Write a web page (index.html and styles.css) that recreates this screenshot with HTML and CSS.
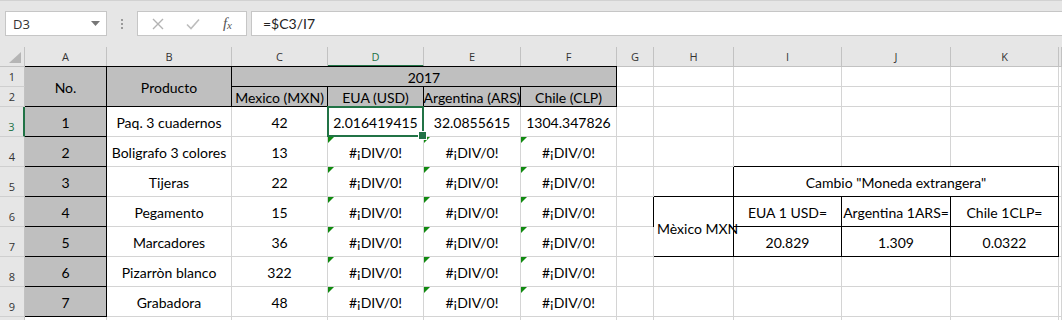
FILE: index.html
```html
<!DOCTYPE html>
<html lang="es">
<head>
  <meta charset="UTF-8">
  <title>Libro1 - Excel</title>
  <link rel="stylesheet" href="styles.css">
</head>
<body>
  <!-- Formula bar -->
  <header class="topbar">
    <div class="namebox">
      <span>D3</span>
      <svg width="9" height="5" viewBox="0 0 9 5"><path d="M0 0h9L4.5 5z" fill="#777"/></svg>
    </div>
    <div class="grip"><i></i><i></i><i></i></div>
    <div class="fbtns">
      <svg width="12" height="12" viewBox="0 0 12 12"><path d="M1 1l10 10M11 1L1 11" stroke="#b3b3b3" stroke-width="1.4" fill="none"/></svg>
      <svg width="14" height="12" viewBox="0 0 14 12"><path d="M1 6.5l4 4L13 1.5" stroke="#bdbdbd" stroke-width="1.6" fill="none"/></svg>
      <span class="fx">f<sub>x</sub></span>
    </div>
    <div class="fbox">=$C3/I7</div>
  </header>

  <!-- Sheet grid -->
  <main class="sheet">
    <!-- column headers -->
    <div class="h corner"><svg width="12" height="11" viewBox="0 0 12 11"><path d="M12 0v11H0z" fill="#b5b5b5"/></svg></div>
    <div class="h">A</div><div class="h">B</div><div class="h">C</div>
    <div class="h on">D</div><div class="h">E</div><div class="h">F</div>
    <div class="h">G</div><div class="h">H</div><div class="h">I</div>
    <div class="h">J</div><div class="h">K</div><div class="h"></div>

    <!-- row 1 -->
    <div class="r">1</div>
    <div class="c g bx span-r">No.</div>
    <div class="c g bx span-r">Producto</div>
    <div class="c g bx span-c4">2017</div>
    <div class="c"></div><div class="c"></div><div class="c"></div><div class="c"></div><div class="c"></div><div class="c"></div>

    <!-- row 2 -->
    <div class="r">2</div>
    <div class="c g bx">Mexico (MXN)</div>
    <div class="c g bx">EUA (USD)</div>
    <div class="c g bx">Argentina (ARS)</div>
    <div class="c g bx">Chile (CLP)</div>
    <div class="c"></div><div class="c"></div><div class="c"></div><div class="c"></div><div class="c"></div><div class="c"></div>

    <!-- row 3 -->
    <div class="r on">3</div>
    <div class="c g bx">1</div>
    <div class="c">Paq. 3 cuadernos</div>
    <div class="c">42</div>
    <div class="c sel">2.016419415</div>
    <div class="c">32.0855615</div>
    <div class="c">1304.347826</div>
    <div class="c"></div><div class="c"></div><div class="c"></div><div class="c"></div><div class="c"></div><div class="c"></div>

    <!-- row 4 -->
    <div class="r">4</div>
    <div class="c g bx">2</div>
    <div class="c">Boligrafo 3 colores</div>
    <div class="c">13</div>
    <div class="c e">#¡DIV/0!</div><div class="c e">#¡DIV/0!</div><div class="c e">#¡DIV/0!</div>
    <div class="c"></div><div class="c"></div><div class="c"></div><div class="c"></div><div class="c"></div><div class="c"></div>

    <!-- row 5 -->
    <div class="r">5</div>
    <div class="c g bx">3</div>
    <div class="c">Tijeras</div>
    <div class="c">22</div>
    <div class="c e">#¡DIV/0!</div><div class="c e">#¡DIV/0!</div><div class="c e">#¡DIV/0!</div>
    <div class="c"></div><div class="c"></div>
    <div class="c bx bl span-c3">Cambio "Moneda extrangera"</div>
    <div class="c"></div>

    <!-- row 6 -->
    <div class="r">6</div>
    <div class="c g bx">4</div>
    <div class="c">Pegamento</div>
    <div class="c">15</div>
    <div class="c e">#¡DIV/0!</div><div class="c e">#¡DIV/0!</div><div class="c e">#¡DIV/0!</div>
    <div class="c"></div>
    <div class="c bx bl span-r left">Mèxico MXN</div>
    <div class="c bx">EUA 1 USD=</div>
    <div class="c bx">Argentina 1ARS=</div>
    <div class="c bx">Chile 1CLP=</div>
    <div class="c"></div>

    <!-- row 7 -->
    <div class="r">7</div>
    <div class="c g bx">5</div>
    <div class="c">Marcadores</div>
    <div class="c">36</div>
    <div class="c e">#¡DIV/0!</div><div class="c e">#¡DIV/0!</div><div class="c e">#¡DIV/0!</div>
    <div class="c"></div>
    <div class="c bx">20.829</div>
    <div class="c bx">1.309</div>
    <div class="c bx">0.0322</div>
    <div class="c"></div>

    <!-- row 8 -->
    <div class="r">8</div>
    <div class="c g bx">6</div>
    <div class="c">Pizarròn blanco</div>
    <div class="c">322</div>
    <div class="c e">#¡DIV/0!</div><div class="c e">#¡DIV/0!</div><div class="c e">#¡DIV/0!</div>
    <div class="c"></div><div class="c"></div><div class="c"></div><div class="c"></div><div class="c"></div><div class="c"></div>

    <!-- row 9 -->
    <div class="r">9</div>
    <div class="c g bx">7</div>
    <div class="c">Grabadora</div>
    <div class="c">48</div>
    <div class="c e">#¡DIV/0!</div><div class="c e">#¡DIV/0!</div><div class="c e">#¡DIV/0!</div>
    <div class="c"></div><div class="c"></div><div class="c"></div><div class="c"></div><div class="c"></div><div class="c"></div>

    <!-- row 10 (cut off by the window) -->
    <div class="r"></div>
    <div class="c"></div><div class="c"></div><div class="c"></div><div class="c"></div><div class="c"></div><div class="c"></div>
    <div class="c"></div><div class="c"></div><div class="c"></div><div class="c"></div><div class="c"></div><div class="c"></div>
  </main>
</body>
</html>
```

FILE: styles.css
```css
/* ===== Base ===== */
:root {
  --chrome: #e6e6e6;
  --chrome-line: #c2c2c2;
  --grid: #d4d4d4;
  --fill: #bfbfbf;
  --green: #217346;
  --err: #108a10;
}

* {
  margin: 0;
  padding: 0;
  box-sizing: border-box;
}

body {
  background: #fff;
  color: #000;
  font-family: Lato, "Liberation Sans", sans-serif;
  overflow: hidden;
}

/* ===== Formula bar ===== */
.topbar {
  height: 47px;
  background: var(--chrome);
  border-top: 1px solid #d2d2d2;
  display: flex;
  align-items: flex-start;
  padding: 10px 0 0 5px;
}

.namebox {
  width: 102px;
  height: 25px;
  background: #fff;
  border: 1px solid #c6c6c6;
  display: flex;
  align-items: center;
  justify-content: space-between;
  padding: 0 6px 0 7px;
  font-family: "Open Sans", sans-serif;
  font-size: 13px;
  color: #333;
}

.grip {
  width: 30px;
  height: 25px;
  display: flex;
  flex-direction: column;
  align-items: center;
  justify-content: center;
  gap: 2px;
}

.grip i {
  width: 2px;
  height: 2px;
  background: #9a9a9a;
}

.fbtns {
  width: 110px;
  height: 25px;
  background: #fff;
  border: 1px solid #c6c6c6;
  display: flex;
  align-items: center;
  justify-content: space-between;
  padding: 0 14px 0 14px;
}

.fx {
  font-family: "Liberation Serif", serif;
  font-style: italic;
  font-size: 15px;
  color: #555;
  line-height: 1;
}

.fx sub {
  font-size: 11px;
  vertical-align: -1px;
}

.fbox {
  flex: 1;
  height: 25px;
  margin-left: 4px;
  background: #fff;
  border: 1px solid #c6c6c6;
  border-right: none;
  display: flex;
  align-items: center;
  padding-left: 11px;
  font-size: 14px;
  color: #222;
}

/* ===== Sheet grid ===== */
.sheet {
  display: grid;
  grid-template-columns: 25px 82px 125px 96px 96px 97px 96px 37px 80px 108px 109px 108px 1fr;
  grid-template-rows: 20px 20px 20px repeat(8, 30px);
}

.h {
  background: var(--chrome);
  border-right: 1px solid var(--chrome-line);
  border-bottom: 1px solid var(--chrome-line);
  display: flex;
  align-items: center;
  justify-content: center;
  font-family: "Open Sans", sans-serif;
  font-size: 11px;
  color: #333;
}

.h.on {
  color: var(--green);
  border-bottom: 2px solid var(--green);
}

.corner {
  align-items: flex-end;
  justify-content: flex-end;
  padding: 0 3px 3px 0;
}

.r {
  background: var(--chrome);
  border-right: 1px solid var(--chrome-line);
  border-bottom: 1px solid #cfcfcf;
  display: flex;
  align-items: flex-end;
  justify-content: center;
  padding-bottom: 2px;
  font-family: "Open Sans", sans-serif;
  font-size: 11px;
  color: #333;
}

.r.on {
  color: var(--green);
  border-right: 2px solid var(--green);
}

.c {
  position: relative;
  border-right: 1px solid var(--grid);
  border-bottom: 1px solid var(--grid);
  display: flex;
  align-items: center;
  justify-content: center;
  padding-top: 2px;
  overflow: hidden;
  white-space: nowrap;
  font-size: 14px;
}

.c.left {
  justify-content: flex-start;
  padding-left: 3px;
  padding-top: 4px;
}

.g {
  background: var(--fill);
}

/* black cell borders; top/left drawn onto the neighbour line */
.bx {
  border-right-color: #000;
  border-bottom-color: #000;
  box-shadow: 0 -1px 0 #000;
  overflow: visible;
}

.bx.bl {
  box-shadow: 0 -1px 0 #000, -1px 0 0 #000;
}

.span-r { grid-row: span 2; }
.span-c4 { grid-column: span 4; }
.span-c3 { grid-column: span 3; }

/* error indicator */
.e::before {
  content: "";
  position: absolute;
  top: 0;
  left: 0;
  border-top: 6px solid var(--err);
  border-right: 6px solid transparent;
}

/* active cell */
.sel {
  overflow: visible;
  z-index: 2;
}

.sel::after {
  content: "";
  position: absolute;
  top: -1px;
  left: -1px;
  right: -1px;
  bottom: -1px;
  border: 2px solid var(--green);
}

.sel::before {
  content: "";
  position: absolute;
  right: -4px;
  bottom: -4px;
  width: 7px;
  height: 7px;
  background: var(--green);
  border: 1px solid #fff;
  z-index: 3;
}
```
